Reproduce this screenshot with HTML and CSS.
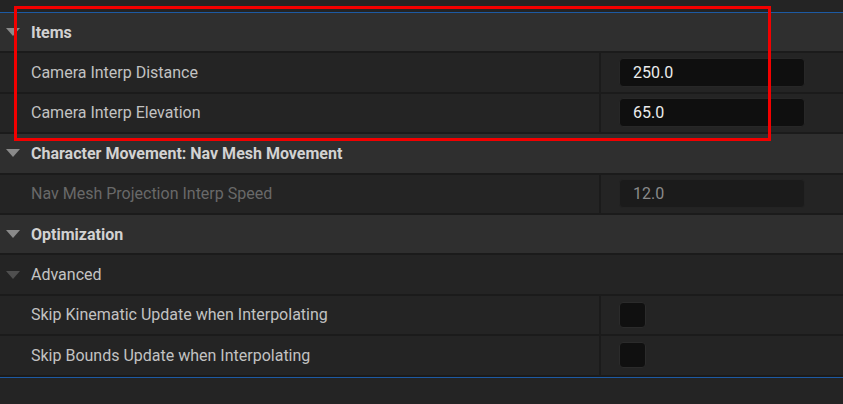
FILE: index.html
```html
<!DOCTYPE html>
<html lang="en">
<head>
    <meta charset="UTF-8">
    <title>Details</title>
    <link rel="stylesheet" href="styles.css">
</head>
<body>

<div class="panel">
    <div class="top-line"></div>

    <div class="row header">
        <span class="arrow"></span>
        <span class="title">Items</span>
    </div>
    <div class="row prop">
        <div class="name">Camera Interp Distance</div>
        <div class="value"><div class="field">250.0</div></div>
    </div>
    <div class="row prop">
        <div class="name">Camera Interp Elevation</div>
        <div class="value"><div class="field">65.0</div></div>
    </div>

    <div class="row header">
        <span class="arrow"></span>
        <span class="title">Character Movement: Nav Mesh Movement</span>
    </div>
    <div class="row prop disabled">
        <div class="name">Nav Mesh Projection Interp Speed</div>
        <div class="value"><div class="field">12.0</div></div>
    </div>

    <div class="row header">
        <span class="arrow"></span>
        <span class="title">Optimization</span>
    </div>
    <div class="row sub">
        <span class="arrow dim"></span>
        <span class="title">Advanced</span>
    </div>
    <div class="row prop">
        <div class="name">Skip Kinematic Update when Interpolating</div>
        <div class="value"><div class="check"></div></div>
    </div>
    <div class="row prop">
        <div class="name">Skip Bounds Update when Interpolating</div>
        <div class="value"><div class="check"></div></div>
    </div>

    <div class="bottom-line"></div>

    <!-- highlight box drawn over the Items section -->
    <div class="highlight"></div>
</div>

</body>
</html>
```

FILE: styles.css
```css
body {
    margin: 0;
    background-color: #242424;
    font-family: Roboto, "Noto Sans", sans-serif;
    font-size: 16px;
    color: #c2c2c2;
}

.panel {
    position: relative;
    width: 843px;
    height: 404px;
    padding-top: 12px;
    box-sizing: border-box;
}

.top-line,
.bottom-line {
    height: 1px;
    background-color: #1d5aa3;
}

.row {
    display: flex;
    align-items: center;
    height: 38.4px;
    border-bottom: 2px solid #1b1b1b;
    background-color: #242424;
}

.header {
    background-color: #2f2f2f;
}

.header .title {
    font-weight: bold;
    color: #d2d2d2;
}

.arrow {
    width: 0;
    height: 0;
    margin: 0 11px 0 6px;
    border-left: 7px solid transparent;
    border-right: 7px solid transparent;
    border-top: 8px solid #8a8a8a;
}

.arrow.dim {
    border-top-color: #4f4f4f;
}

.sub .title {
    color: #c4c4c4;
}

.prop {
    align-items: stretch;
}

.name {
    width: 568px;
    padding-left: 31px;
    display: flex;
    align-items: center;
}

.value {
    flex: 1;
    border-left: 2px solid #1b1b1b;
    display: flex;
    align-items: center;
    padding-left: 18px;
}

.field {
    width: 186px;
    height: 29px;
    box-sizing: border-box;
    padding-left: 13px;
    display: flex;
    align-items: center;
    background-color: #0f0f0f;
    border: 1px solid #272727;
    border-radius: 4px;
    color: #ececec;
}

.disabled .name {
    color: #696969;
}

.disabled .field {
    background-color: #1b1b1b;
    border-color: #232323;
    color: #8a8a8a;
}

.check {
    width: 27px;
    height: 26px;
    box-sizing: border-box;
    background-color: #101010;
    border: 1px solid #2b2b2b;
    border-radius: 4px;
}

.highlight {
    position: absolute;
    left: 14px;
    top: 6px;
    width: 757px;
    height: 135px;
    box-sizing: border-box;
    border: 3px solid #f20000;
}
```
